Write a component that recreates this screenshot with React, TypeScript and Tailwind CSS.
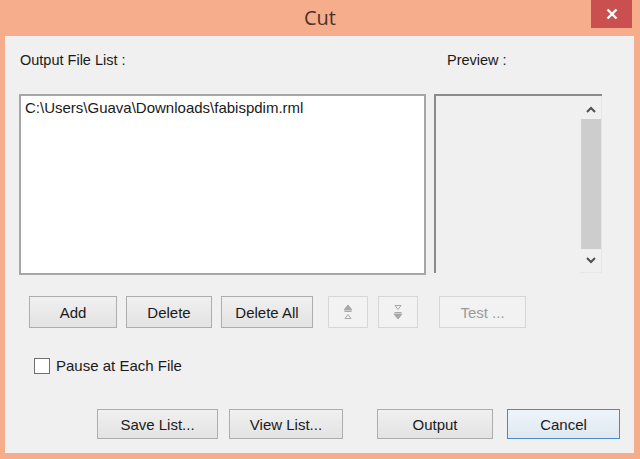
import React from "react";

const font = { fontFamily: '"Liberation Sans", Arial, sans-serif' };

function Btn({
  children,
  w,
  disabled,
  primary,
}: {
  children: React.ReactNode;
  w: string;
  disabled?: boolean;
  primary?: boolean;
}) {
  const base = "flex h-full items-center justify-center text-[15px] leading-none";
  if (disabled) {
    return (
      <div className={`${base} ${w} border border-[#d6d6d6] bg-[#f2f2f2] text-[#9a9a9a]`}>{children}</div>
    );
  }
  return (
    <div
      className={`${base} ${w} border ${
        primary ? "border-[#4a8ac4] bg-gradient-to-b from-[#eef4fa] to-[#dfe8f1]" : "border-[#adadad] bg-gradient-to-b from-[#f0f0f0] to-[#e3e3e3]"
      } text-[#1a1a1a]`}
    >
      {children}
    </div>
  );
}

function ArrowIcon({ down }: { down?: boolean }) {
  return (
    <svg width="10" height="16" viewBox="0 0 10 16" fill="none" stroke="#a8a8a8" strokeWidth="1">
      {down ? (
        <>
          <path d="M2 1.5h6L5 5.5z" />
          <path d="M1.5 8.5h7" />
          <path d="M1 10h8L5 15z" fill="#a8a8a8" />
        </>
      ) : (
        <>
          <path d="M5 1L9 6H1z" fill="#a8a8a8" />
          <path d="M1.5 7.5h7" />
          <path d="M2 14.5h6L5 10.5z" />
        </>
      )}
    </svg>
  );
}

export default function App() {
  return (
    <div className="flex h-[459px] w-[640px] flex-col bg-[#f5ad8c]" style={font}>
      {/* Title bar */}
      <div className="grid h-[36px] grid-cols-[1fr_auto_1fr]">
        <div />
        <div
          className="pt-[3px] text-[20px] text-[#4a3028]"
          style={{ fontFamily: '"Open Sans", "Noto Sans", sans-serif' }}
        >
          Cut
        </div>
        <div className="flex justify-end pr-[8px]">
          <div className="flex h-[28px] w-[41px] items-center justify-center bg-[#c9504f]">
            <svg width="12" height="12" viewBox="0 0 12 12" stroke="white" strokeWidth="2.4">
              <path d="M1.5 1.5l9 9M10.5 1.5l-9 9" />
            </svg>
          </div>
        </div>
      </div>

      {/* Client area */}
      <div className="ml-[5px] mr-[6px] h-[417px] bg-[#f0f0f0] text-[15px] text-[#1a1a1a]">
        <div className="flex pl-[14px] pt-[16px]">
          <div className="w-[407px]">
            <div className="pl-[1px] text-[14.5px] leading-[16px]">Output File List :</div>
            <div className="mt-[26px] h-[181px] border-2 border-[#a6a6a6] bg-white px-[4px] pt-[4px] leading-[16px]">
              C:\Users\Guava\Downloads\fabispdim.rml
            </div>
          </div>
          <div className="ml-[8px] w-[168px]">
            <div className="pl-[13px] text-[14.5px] leading-[16px]">Preview :</div>
            <div className="mt-[26px] flex h-[179px] border-l-2 border-t-2 border-[#8a8a8a] bg-[#f0f0f0]">
              <div className="flex-1" />
              <div className="flex w-[22px] flex-col items-center border-b border-r border-[#e6e6e6] bg-[#f0f0f0]">
                <svg className="mt-[10px]" width="10" height="7" viewBox="0 0 10 7" fill="none" stroke="#505050" strokeWidth="2">
                  <path d="M1 6l4-4 4 4" />
                </svg>
                <div className="mt-[6px] h-[130px] w-[20px] bg-[#cdcdcd]" />
                <svg className="mt-[8px]" width="10" height="7" viewBox="0 0 10 7" fill="none" stroke="#505050" strokeWidth="2">
                  <path d="M1 1l4 4 4-4" />
                </svg>
              </div>
            </div>
          </div>
        </div>

        {/* Buttons row */}
        <div className="ml-[24px] mt-[21px] flex h-[32px]">
          <Btn w="w-[88px]">Add</Btn>
          <div className="w-[9px]" />
          <Btn w="w-[86px]">Delete</Btn>
          <div className="w-[9px]" />
          <Btn w="w-[92px]">Delete All</Btn>
          <div className="w-[15px]" />
          <Btn w="w-[40px]" disabled>
            <ArrowIcon />
          </Btn>
          <div className="w-[10px]" />
          <Btn w="w-[40px]" disabled>
            <ArrowIcon down />
          </Btn>
          <div className="w-[21px]" />
          <Btn w="w-[87px]" disabled>
            Test ...
          </Btn>
        </div>

        {/* Checkbox */}
        <div className="ml-[29px] mt-[30px] flex items-center">
          <div className="h-[16px] w-[16px] border border-[#707070] bg-white" />
          <span className="ml-[6px] leading-[16px]">Pause at Each File</span>
        </div>

        {/* Bottom buttons */}
        <div className="ml-[92px] mt-[35px] flex h-[30px]">
          <Btn w="w-[121px]">Save List...</Btn>
          <div className="w-[11px]" />
          <Btn w="w-[114px]">View List...</Btn>
          <div className="w-[34px]" />
          <Btn w="w-[116px]">Output</Btn>
          <div className="w-[14px]" />
          <Btn w="w-[113px]" primary>
            Cancel
          </Btn>
        </div>
      </div>
    </div>
  );
}
